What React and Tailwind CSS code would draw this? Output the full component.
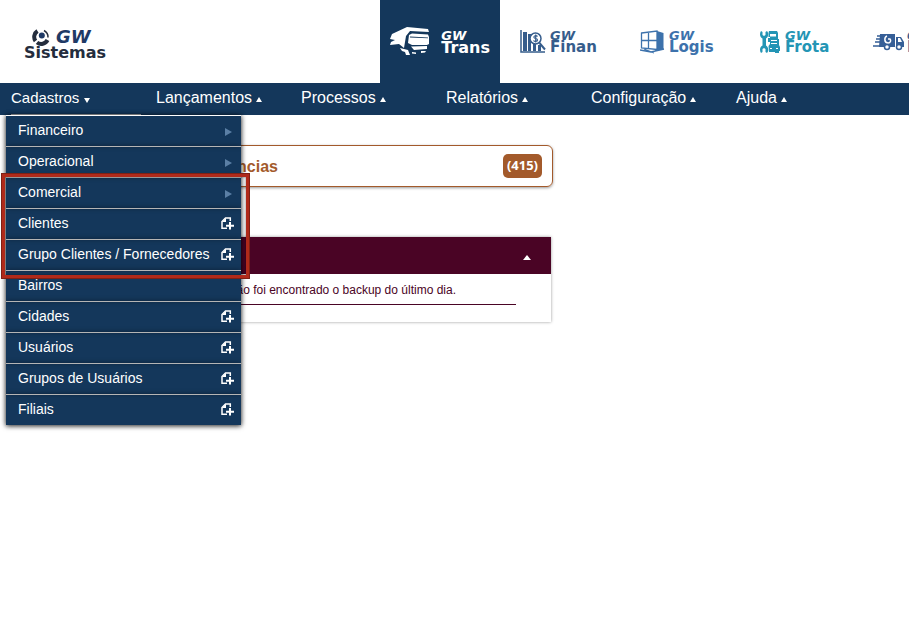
import React from "react";

const navItems = ["Lançamentos", "Processos", "Relatórios", "Configuração", "Ajuda"];

const menuItems = [
  { label: "Financeiro", kind: "submenu" },
  { label: "Operacional", kind: "submenu" },
  { label: "Comercial", kind: "submenu" },
  { label: "Clientes", kind: "add" },
  { label: "Grupo Clientes / Fornecedores", kind: "add" },
  { label: "Bairros", kind: "plain" },
  { label: "Cidades", kind: "add" },
  { label: "Usuários", kind: "add" },
  { label: "Grupos de Usuários", kind: "add" },
  { label: "Filiais", kind: "add" },
];

function Swirl() {
  return (
    <svg width="18" height="18" viewBox="0 0 18 18" fill="none" aria-hidden="true">
      <path d="M5.500 3A7 7 0 0 0 3.500 13" stroke="#242d3d" strokeWidth="4" />
      <path d="M5 14.500A7 7 0 0 0 15.500 12" stroke="#242d3d" strokeWidth="4" />
      <path d="M12 2.500A7.500 7.500 0 0 1 16 9.500" stroke="#242d3d" strokeWidth="1.500" />
      <circle cx="9.800" cy="7.500" r="3" fill="#1f3a66" />
    </svg>
  );
}

function TruckFront() {
  return (
    <svg width="40" height="30" viewBox="0 0 40 30" fill="white" aria-hidden="true">
      <path d="M2 7L17 0L38 2L39 5L20 4L16 9L14 21L9 17L0 18L1 15L5 13L0 12Z" />
      <path d="M19 8L22 6.500L38 7.500L39 10V17L37 18H22L18 16Z" />
      <path d="M20 9.500L38 10.500V11.200L20 10.500Z" fill="#14375b" />
      <path d="M21 19.500L37 19L37 22L24 23Z" />
      <path d="M10 21L18 23L20 28L16 28L15 25L12 24ZM22 25L26 25.500V27L22 26.500ZM31 24H36L35 25.500L31 26Z" />
    </svg>
  );
}

function ChartLens() {
  return (
    <svg width="26" height="24" viewBox="0 0 26 24" fill="none" aria-hidden="true">
      <path d="M1 0V22H25" stroke="#365d8c" strokeWidth="1.500" />
      <path d="M3 2H7V21H3ZM8 4H11V21H8ZM13 14H16V21H13ZM18 15H21V21H18Z" fill="#365d8c" />
      <circle cx="15.500" cy="8.500" r="5.500" fill="white" stroke="#365d8c" strokeWidth="1.500" />
      <path d="M19.500 13L25 19.500" stroke="#365d8c" strokeWidth="2" />
      <path d="M17.500 6.500C16 5 13.500 5.700 14 7.500C14.500 9 17.500 8 17.500 10C17.500 11.700 14.500 12 13.500 10.500M15.700 4.500V12.500" stroke="#365d8c" strokeWidth="1.200" />
    </svg>
  );
}

function Pallet() {
  return (
    <svg width="25" height="24" viewBox="0 0 25 24" aria-hidden="true">
      <path d="M17 1L23.500 3V19L17 21Z" fill="#3d72ac" />
      <path d="M1.500 3L17 1V19.500L1.500 18ZM8.500 2V18.500M1.500 10.500H17" fill="none" stroke="#3d72ac" strokeWidth="1.300" />
      <path d="M0 20L11 22L24 19M4 19L14 23M12 22L17 20" fill="none" stroke="#3d72ac" strokeWidth="1.300" />
    </svg>
  );
}

function Workshop() {
  return (
    <svg width="21" height="24" viewBox="0 0 21 24" fill="#2495b5" aria-hidden="true">
      <path d="M1 1L2.500 2V5L4 6L5.500 5V2L7 1C9 3 8.500 7 6 8.500V15.500C8.500 17 9 21 7 23L5.500 22V19L4 18L2.500 19V22L1 23C-.5 21-.5 17 2.500 15.500V8.500C-.5 7-.5 3 1 1Z" />
      <path d="M9 1H17L18 3V9H19V15L20 17V21H19V23H15V22H9L8.500 16L10 14V12H8V8H10V7H8.500V3Z" />
      <path d="M10 4H16V6.500H10ZM11 10H17V11H11ZM11 13H17V14H11ZM10 18H12V19H10ZM16 18H18V19H16Z" fill="white" />
    </svg>
  );
}

function Delivery() {
  return (
    <svg width="32" height="18" viewBox="0 0 32 18" aria-hidden="true">
      <path d="M7 1H22V14H6ZM23 4H28L31 9V14H23Z" fill="#365f97" />
      <path d="M4 3H8M3 6H8M2 9H8M0 13H8" stroke="#365f97" strokeWidth="1.300" />
      <path d="M14 3C11 4 11 10 15 10C18 10 18 7 17 6H15" fill="none" stroke="white" strokeWidth="1.500" />
      <path d="M25 5H27L29 9H25Z" fill="white" />
      <circle cx="14" cy="14" r="2.500" fill="white" stroke="#365f97" strokeWidth="1.500" />
      <circle cx="26" cy="14" r="2.500" fill="white" stroke="#365f97" strokeWidth="1.500" />
    </svg>
  );
}

function AddPage() {
  return (
    <svg width="13" height="13" viewBox="0 0 13 13" fill="none" aria-hidden="true">
      <path d="M9.300 4V1H4.500L1 4.500V11.300H6" stroke="white" strokeWidth="1.500" />
      <path d="M1 5H5V1Z" fill="white" />
      <path d="M9 5V12.500M5 8.700H13" stroke="white" strokeWidth="2" />
    </svg>
  );
}

function Caret({ down = false }) {
  return (
    <svg className="mt-[3px]" width="6" height="5" viewBox="0 0 6 5" fill="white" aria-hidden="true">
      <path d={down ? "M0 0H6L3 5Z" : "M0 5H6L3 0Z"} />
    </svg>
  );
}

const apps = [
  { name: "Trans", icon: TruckFront, style: "justify-between bg-[#14375b] px-[10px] text-base text-white" },
  { name: "Finan", icon: ChartLens, style: "gap-1 pl-5 text-[15px] text-[#365d8c]" },
  { name: "Logis", icon: Pallet, style: "gap-1 pl-5 text-[15px] text-[#3d72ac]" },
  { name: "Frota", icon: Workshop, style: "gap-1 pl-5 text-[15px] text-[#2495b5]" },
  { name: "Log", icon: Delivery, style: "gap-[2px] pl-[13px] text-[15px] text-[#365f97]" },
];

export default function App() {
  return (
    <div className="min-h-screen overflow-hidden bg-white font-['Liberation_Sans',Arial,sans-serif]">
      <header className="flex h-[83px] overflow-hidden font-['DejaVu_Sans',sans-serif]">
        <a href="#inicio" className="flex w-[380px] shrink-0 flex-col pt-7 pl-6 text-[#242d3d]">
          <span className="flex h-[18px] items-center gap-[6px] pl-2">
            <Swirl />
            <span className="text-lg leading-4 font-bold text-[#1f3a66] italic">GW</span>
          </span>
          <span className="text-base leading-[14px] font-bold">Sistemas</span>
        </a>
        {apps.map(({ name, icon: Icon, style }) => (
          <a key={name} href={`#${name}`} className={`flex w-[120px] shrink-0 items-center ${style}`}>
            <Icon />
            <span className="flex flex-col font-bold">
              <span className="text-[13px] leading-[11px] italic">GW</span>
              <span className="leading-[13px]">{name}</span>
            </span>
          </a>
        ))}
      </header>

      <nav className="relative z-10 flex h-8 bg-[#14375b] pl-[11px] text-white">
        <div className="w-[145px] shrink-0">
          <button type="button" className="flex h-8 w-[130px] items-center gap-[5px] border-b border-[#b5b5b5] text-[15px]">
            Cadastros <Caret down />
          </button>
        </div>
        {navItems.map((item) => (
          <button key={item} type="button" className="flex h-[30px] w-[145px] shrink-0 items-center gap-1 text-base">
            {item} <Caret />
          </button>
        ))}

        <ul className="absolute top-8 left-[6px] w-[235px] bg-[#14375b] shadow-[0_1px_5px_rgba(0,0,0,0.7)]">
          {menuItems.map(({ label, kind }) => (
            <li key={label} className="border-t border-[#b5b5b5] shadow-[0_0_5px_rgba(0,0,0,0.4)] first:border-white">
              <a href={`#${label}`} className="flex h-[30px] items-center justify-between pr-[7px] pb-[2px] pl-3 text-sm whitespace-nowrap">
                <span>{label}</span>
                {kind === "submenu" && (
                  <svg className="mt-1" width="9" height="8" viewBox="0 0 9 8" fill="#5b7fa5" aria-hidden="true">
                    <path d="M0 0L7 4L0 8Z" />
                  </svg>
                )}
                {kind === "add" && <AddPage />}
              </a>
            </li>
          ))}
        </ul>
        <div className="pointer-events-none absolute top-[90px] left-px h-[106px] w-[249px] border-4 border-[#b02a1a] shadow-[inset_0_0_2px_rgba(0,0,0,0.6)] outline-1 -outline-offset-1 outline-[#7e2015]" />
      </nav>

      <main className="flex max-w-[553px] flex-col gap-[50px] pt-[30px] pl-[18px]">
        <section className="flex h-[42px] items-center justify-between rounded-md border border-[#a35a2b] pr-[10px] pl-[170px] text-[#a35a2b] shadow-[0_1px_3px_rgba(0,0,0,0.4)]">
          <h2 className="pt-[2px] text-base font-bold">Pendências</h2>
          <span className="h-6 rounded-[5px] bg-[#a35a2b] px-1 font-['Noto_Sans',sans-serif] text-[13px] leading-[22px] font-bold text-white">(415)</span>
        </section>
        <section className="mr-[2px] h-[85px] bg-white text-[#4a0425] shadow-[0_0_3px_rgba(0,0,0,0.4)]">
          <div className="flex h-[37px] items-center justify-end bg-[#4a0425] pt-1 pr-5">
            <button type="button" aria-label="Recolher">
              <svg width="8" height="5" viewBox="0 0 8 5" fill="white" aria-hidden="true">
                <path d="M0 5H8L4 0Z" />
              </svg>
            </button>
          </div>
          <p className="mr-[35px] h-[31px] border-b border-[#4a0425] pr-[60px] text-right text-xs leading-8">
            Não foi encontrado o backup do último dia.
          </p>
        </section>
      </main>
    </div>
  );
}
